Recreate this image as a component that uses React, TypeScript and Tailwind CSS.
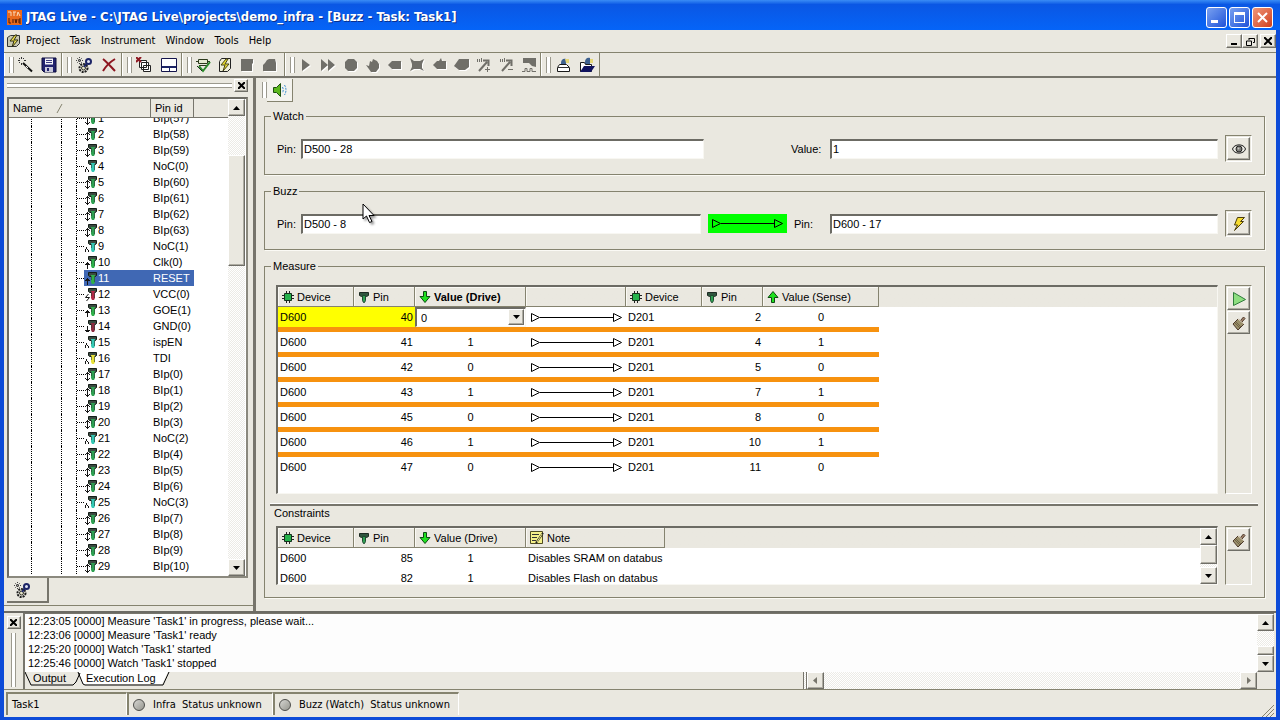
import { useState } from 'react';
import type { ReactNode } from 'react';
import clsx from 'clsx';

const RAISED = 'border border-t-white border-l-white border-r-[#6f6e67] border-b-[#6f6e67] bg-[#eae8e0] shadow-[inset_-1px_-1px_0_#aeaca2]';
const SUNKEN = 'border-t-2 border-l-2 border-r border-b border-t-[#6c6b64] border-l-[#6c6b64] border-r-[#f8f7f2] border-b-[#f8f7f2]';
const FIELDSET = 'min-w-0 border border-[#85836f] px-3 shadow-[1px_1px_0_#fbfaf5]';
const TROUGH = 'bg-[repeating-conic-gradient(#ffffff_0_25%,#ecebe6_0_50%)] bg-[length:2px_2px]';
const TAHOMA = "font-['DejaVu_Sans_Condensed','DejaVu_Sans',sans-serif]";

type PinKind = 'bip' | 'noc' | 'in' | 'vcc' | 'gnd' | 'tdi';

const TREE_PINS: { no: number; id: string; kind: PinKind }[] = [
  { no: 1, id: 'BIp(57)', kind: 'bip' },
  { no: 2, id: 'BIp(58)', kind: 'bip' },
  { no: 3, id: 'BIp(59)', kind: 'bip' },
  { no: 4, id: 'NoC(0)', kind: 'noc' },
  { no: 5, id: 'BIp(60)', kind: 'bip' },
  { no: 6, id: 'BIp(61)', kind: 'bip' },
  { no: 7, id: 'BIp(62)', kind: 'bip' },
  { no: 8, id: 'BIp(63)', kind: 'bip' },
  { no: 9, id: 'NoC(1)', kind: 'noc' },
  { no: 10, id: 'Clk(0)', kind: 'in' },
  { no: 11, id: 'RESET', kind: 'in' },
  { no: 12, id: 'VCC(0)', kind: 'vcc' },
  { no: 13, id: 'GOE(1)', kind: 'in' },
  { no: 14, id: 'GND(0)', kind: 'gnd' },
  { no: 15, id: 'ispEN', kind: 'noc' },
  { no: 16, id: 'TDI', kind: 'tdi' },
  { no: 17, id: 'BIp(0)', kind: 'bip' },
  { no: 18, id: 'BIp(1)', kind: 'bip' },
  { no: 19, id: 'BIp(2)', kind: 'bip' },
  { no: 20, id: 'BIp(3)', kind: 'bip' },
  { no: 21, id: 'NoC(2)', kind: 'noc' },
  { no: 22, id: 'BIp(4)', kind: 'bip' },
  { no: 23, id: 'BIp(5)', kind: 'bip' },
  { no: 24, id: 'BIp(6)', kind: 'bip' },
  { no: 25, id: 'NoC(3)', kind: 'noc' },
  { no: 26, id: 'BIp(7)', kind: 'bip' },
  { no: 27, id: 'BIp(8)', kind: 'bip' },
  { no: 28, id: 'BIp(9)', kind: 'bip' },
  { no: 29, id: 'BIp(10)', kind: 'bip' },
];

const PIN_COLORS: Record<PinKind, string> = {
  bip: '#2fa052',
  noc: '#35c8b4',
  in: '#2fb04a',
  vcc: '#b02a48',
  gnd: '#8e2c40',
  tdi: '#e8e23a',
};

// small marker drawn left of the pin head
const PIN_MARKS: Record<PinKind, string> = {
  bip: 'M3.5 6v9M2 7.5h3M1 8.500h1M5 8.500h1M1 12.500h1M5 12.500h1M2 13.500h3',
  noc: 'M1.500 11v3M2.500 9v2M3.500 11v1M4.500 12v2',
  in: 'M3.500 8v7M1 10.500h5M2 9.500h3',
  vcc: 'M4.500 8L1.500 11.500h4L2.500 15',
  gnd: 'M3.500 8v6M1 12.500h5M2 13.500h3',
  tdi: 'M1.500 11v3M2.500 9v2M3.500 11v1M4.500 12v2',
};

const MEASUREMENTS = [
  { drivePin: 40, drive: 0, sensePin: 2, sense: 0 },
  { drivePin: 41, drive: 1, sensePin: 4, sense: 1 },
  { drivePin: 42, drive: 0, sensePin: 5, sense: 0 },
  { drivePin: 43, drive: 1, sensePin: 7, sense: 1 },
  { drivePin: 45, drive: 0, sensePin: 8, sense: 0 },
  { drivePin: 46, drive: 1, sensePin: 10, sense: 1 },
  { drivePin: 47, drive: 0, sensePin: 11, sense: 0 },
];

const CONSTRAINTS = [
  { device: 'D600', pin: 85, value: 1, note: 'Disables SRAM on databus' },
  { device: 'D600', pin: 82, value: 1, note: 'Disables Flash on databus' },
];

const LOG_LINES = [
  "12:23:05 [0000] Measure 'Task1' in progress, please wait...",
  "12:23:06 [0000] Measure 'Task1' ready",
  "12:25:20 [0000] Watch 'Task1' started",
  "12:25:46 [0000] Watch 'Task1' stopped",
];

/* ---------- icons ---------- */

function Icon({ size = 16, className, children }: { size?: number; className?: string; children: ReactNode }) {
  return (
    <svg width={size} height={size} viewBox={`0 0 ${size} ${size}`} className={clsx('shrink-0', className)} fill="none" aria-hidden="true">
      {children}
    </svg>
  );
}

const WandIcon = () => (
  <Icon>
    <path d="M5 6l9 8.500" stroke="#111" strokeWidth="2" />
    <path d="M8 9l2 2" stroke="#eee" />
    <path d="M3.500 0v2M3.500 6v2M0 3.500h2M6 3.500h2M1 1l1 1M6 1l-1 1M1 6l1-1" stroke="#333" />
  </Icon>
);

const SaveIcon = () => (
  <Icon>
    <path d="M1 1h14v14H3l-2-2z" fill="#22226e" stroke="#0b0b3c" />
    <path d="M4 1.500h8v6H4z" fill="#f4f4f8" />
    <path d="M5 3.500h6M5 5.500h6" stroke="#3c3c80" />
    <path d="M4 10h8v5H4z" fill="#c9c9da" />
    <path d="M6 11h2v3H6z" fill="#22226e" />
  </Icon>
);

const GearsIcon = () => (
  <Icon>
    <path d="M3.500 0v7M0 3.500h7M1 1l5 5M6 1L1 6" stroke="#444" strokeDasharray="1 1" />
    <circle cx="12.500" cy="4.500" r="2.500" fill="#dfe3f4" stroke="#1c2466" strokeWidth="2" />
    <circle cx="7.500" cy="11" r="4" stroke="#1d1d1d" strokeWidth="2" strokeDasharray="2 1" />
    <circle cx="7.500" cy="11" r="2" fill="#e8e6c8" stroke="#33332a" />
    <path d="M11 6l-3 4" stroke="#1c2466" strokeWidth="2" />
  </Icon>
);

const DeleteIcon = () => (
  <Icon>
    <path d="M2 2c4 3 8 8 12 12M14 2C9 5 5 9 2 14" stroke="#8d1620" strokeWidth="2" />
  </Icon>
);

const CascadeIcon = () => (
  <Icon>
    <path d="M3.500 3.500h7v7h-7zM5.500 5.500h7v7h-7zM7.500 8.500h7v6h-7z" fill="#fff" stroke="#222" />
    <path d="M0 0l5 5M5 0L0 5" stroke="#8d1620" strokeWidth="2" />
  </Icon>
);

const PanelIcon = () => (
  <Icon>
    <path d="M.5 1.500h15v13H.5z" fill="#fff" stroke="#14144c" />
    <path d="M1 9h14v2H1z" fill="#1c2466" />
    <path d="M8.500 10v4" stroke="#1c2466" />
  </Icon>
);

const ChipCheckIcon = () => (
  <Icon>
    <path d="M3.500 2.500h9v4h-9z" fill="#e4ead0" stroke="#2c3a1c" />
    <path d="M1 4.500h2M13 4.500h2M4 8.500h8" stroke="#2c3a1c" />
    <path d="M4 9l4 5 7-9" stroke="#2a8a2a" strokeWidth="2" />
    <path d="M2 9l5 5" stroke="#1f2f1f" />
  </Icon>
);

const BoltPageIcon = () => (
  <Icon>
    <path d="M4.500 1.500h9v10l-3 3h-8v-10z" fill="#f0f0d8" stroke="#222" />
    <path d="M9 2L4 8h4l-2 6 6-7H8l3-5z" fill="#f0e22a" stroke="#44421a" />
  </Icon>
);

const Shape = ({ d }: { d: string }) => (
  <Icon>
    <path d={d} fill="#fff" transform="translate(1 1)" />
    <path d={d} fill="#706f69" />
  </Icon>
);

const ProbeIcon = ({ sign }: { sign: string }) => (
  <Icon>
    <path d="M3 14l8-9M7 3.500h5.500V9" stroke="#706f69" strokeWidth="2" />
    <path d="M1.500 2v3M3.500 2v3M5.500 1v4" stroke="#706f69" />
    <path d={sign} stroke="#706f69" />
  </Icon>
);

const WaveIcon = () => (
  <Icon>
    <path d="M2 1h13v9l-4-1-3-3H2z" fill="#706f69" />
    <path d="M1 14.500h3v-3h2v3h3v-3h2v3h4" stroke="#706f69" />
  </Icon>
);

const TrayIcon = () => (
  <Icon>
    <path d="M6 6c0-3 2-5 5-4v5H6z" fill="#3e618f" />
    <path d="M10 2h4v4h-3z" fill="#e5d777" />
    <path d="M4.500 7.500h7l3 3v4h-12v-4z" fill="#fff" stroke="#1a1a1a" />
    <path d="M3 10.500h11" stroke="#333" />
  </Icon>
);

const FolderIcon = () => (
  <Icon>
    <path d="M6 5c0-3 2-5 5-4v6H6z" fill="#3e618f" />
    <path d="M11 2h3v4h-3z" fill="#e5d777" />
    <path d="M1.500 5.500h4l1 2h6v7h-11z" fill="#fff" stroke="#1a1a1a" />
    <path d="M5 9h11l-4 6H1z" fill="#10125e" />
  </Icon>
);

const SpeakerIcon = () => (
  <Icon>
    <path d="M1.500 5.500h3l4-4v13l-4-4h-3z" fill="#5cb81e" stroke="#1d4f10" />
    <path d="M10.500 5c1 2 1 4 0 6M12.500 3c2 3 2 7 0 10" stroke="#3b8fd0" strokeDasharray="2 1" />
  </Icon>
);

const EyeIcon = () => (
  <Icon>
    <path d="M1.500 8C3 2.500 13 2.500 14.500 8 13 13.500 3 13.500 1.500 8z" fill="#e8e8e2" stroke="#1a1a1a" strokeWidth="1" />
    <circle cx="8" cy="8" r="3" fill="#7c7c78" stroke="#222" />
    <circle cx="7.500" cy="7.500" r="1" fill="#c8c8c4" />
  </Icon>
);

const BoltIcon = () => (
  <Icon>
    <path d="M6.500 1.500h7l-4 4h3L3.500 14.500 6.500 9H3.500z" fill="#f6dc30" stroke="#4a3c0a" strokeLinejoin="round" />
  </Icon>
);

const RunIcon = () => (
  <Icon>
    <path d="M2.500 1.500l12 7-12 6z" fill="#8ede80" stroke="#2f7c3b" />
  </Icon>
);

const BrushIcon = () => (
  <Icon>
    <path d="M9.500 5.500l3-3.500 1.500 1.500-3 3.500z" fill="#a0826a" stroke="#4c382a" />
    <path d="M2 9l5-5 6 5-6 6z" fill="#9a8f6a" stroke="#4c382a" />
    <path d="M7 4l6 5" stroke="#f0e6cc" />
    <path d="M4 8l5 5M5 7l5 5" stroke="#6f6345" />
  </Icon>
);

const ChipIcon = () => (
  <Icon size={12}>
    <path d="M2.500 2.500h7v7h-7z" fill="#26b34c" stroke="#15301c" />
    <path d="M4.500 0v2M7.500 0v2M4.500 10v2M7.500 10v2M0 4.500h2M0 7.500h2M10 4.500h2M10 7.500h2" stroke="#222" />
  </Icon>
);

const PinHeadIcon = () => (
  <Icon size={12}>
    <path d="M1.500 1.500h9v3l-2 1h-5l-2-1z" fill="#30553f" stroke="#1d2b23" />
    <path d="M4.500 4.500h3v5l-1 2h-1l-1-2z" fill="#2fa052" stroke="#1f4a30" />
  </Icon>
);

const ArrowIcon = ({ up }: { up?: boolean }) => (
  <Icon size={12} className={up ? 'rotate-180' : undefined}>
    <path d="M4.500 .5h3v5h3.500L6 11.500 1 5.500h3.500z" fill="#1fe01f" stroke="#0d4a12" />
  </Icon>
);

const NoteIcon = () => (
  <Icon size={14}>
    <path d="M.5 .5h12v12H.5z" fill="#f5f08a" stroke="#4e4b22" />
    <path d="M2 3.500h7M2 6.500h5M2 9.500h4" stroke="#333" />
    <path d="M6 12l7-10" stroke="#222" strokeWidth="2" />
    <path d="M7 11l5-8" stroke="#f5f08a" />
  </Icon>
);

const TreePinIcon = ({ kind }: { kind: PinKind }) => (
  <svg width="14" height="16" viewBox="0 0 14 16" className="shrink-0" fill="none" aria-hidden="true">
    <path d="M4.500 2.500h8v3l-1 1h-6l-1-1z" fill="#3a4a40" stroke="#141c17" />
    <path d="M7 5h4v7l-1 2H8l-1-2z" fill={PIN_COLORS[kind]} />
    <path d="M10.500 6v6M7.500 6v4" stroke="#2d4035" strokeOpacity=".6" />
    <path d={PIN_MARKS[kind]} stroke="#151515" />
  </svg>
);

function Wire({ className }: { className?: string }) {
  return (
    <div className={clsx('flex items-center text-black', className)}>
      <svg width="9" height="11" viewBox="0 0 9 11" fill="none" className="shrink-0">
        <path d="M.5 1.500l8 4-8 4z" stroke="currentColor" />
      </svg>
      <div className="h-px flex-1 bg-current" />
      <svg width="9" height="11" viewBox="0 0 9 11" fill="none" className="shrink-0">
        <path d="M.5 1.500l8 4-8 4z" stroke="currentColor" />
      </svg>
    </div>
  );
}

/* ---------- small controls ---------- */

function Grip() {
  return <div className="h-4 w-[5px] shrink-0 border-x border-[#9b998e] bg-white" />;
}

function ScrollButton({ dir, muted }: { dir: 'up' | 'down' | 'left' | 'right'; muted?: boolean }) {
  const paths = { up: 'M0 4h7L3.500 0z', down: 'M0 0h7L3.500 4z', left: 'M4 0v7L0 3.500z', right: 'M0 0v7l4-3.500z' };
  const wide = dir === 'up' || dir === 'down';
  return (
    <button aria-label={`Scroll ${dir}`} className={clsx('flex size-[17px] shrink-0 items-center justify-center', RAISED)}>
      <svg width={wide ? 7 : 4} height={wide ? 4 : 7}>
        <path d={paths[dir]} fill={muted ? '#77756c' : '#000'} />
      </svg>
    </button>
  );
}

function CloseButton({ label }: { label: string }) {
  return (
    <button aria-label={label} className={clsx('flex h-[13px] w-[14px] shrink-0 items-center justify-center', RAISED)}>
      <svg width="7" height="7">
        <path d="M0 0l7 7M7 0L0 7" stroke="#000" strokeWidth="2" />
      </svg>
    </button>
  );
}

function IconButton({ label, children }: { label: string; children: ReactNode }) {
  return (
    <button aria-label={label} className={clsx('flex h-[23px] w-full items-center justify-center', RAISED)}>
      {children}
    </button>
  );
}

function IconWell({ children, className }: { children: ReactNode; className?: string }) {
  return (
    <div className={clsx('flex w-[27px] shrink-0 flex-col gap-px border border-t-[#85836f] border-l-[#85836f] border-r-white border-b-white p-px', className)}>
      {children}
    </div>
  );
}

function ToolGroup({ className, tools }: { className: string; tools: [string, ReactNode][] }) {
  return (
    <div className={clsx('flex items-center border-r border-[#85836f] border-l border-l-white pl-1', className)}>
      <Grip />
      <div className="flex flex-1">
        {tools.map(([label, icon]) => (
          <button key={label} aria-label={label} title={label} className="flex h-[22px] flex-1 items-center justify-center">
            {icon}
          </button>
        ))}
      </div>
    </div>
  );
}

function HeadCell({ children, bold }: { children?: ReactNode; bold?: boolean }) {
  return (
    <th
      className={clsx(
        'h-5 border-r border-b border-[#85836f] p-0 pl-1 text-left shadow-[inset_1px_1px_0_#faf9f4]',
        bold ? 'font-bold' : 'font-normal',
      )}
    >
      <span className="flex items-center gap-[3px] whitespace-nowrap">{children}</span>
    </th>
  );
}

/* ---------- window parts ---------- */

function TitleBar() {
  const base = 'flex size-[21px] items-center justify-center rounded-[3px] border border-white';
  return (
    <header className="flex h-[30px] shrink-0 items-center bg-linear-to-b from-[#3a8cf5] via-[#0a57e4] via-15% to-[#0564f8] px-[7px]">
      <svg width="15" height="15" viewBox="0 0 15 15" className="mt-1" aria-hidden="true">
        <path d="M0 0h15v15H0z" fill="#e8691c" />
        <path d="M1 2h3v4M6 2h3M7 2v4M10 6l1-4 2 4" stroke="#fbd9b8" fill="none" />
        <path d="M2 8v5h2M6 9v4M8 9l1 4 1-4M14 9h-2v4h2M12 11h2" stroke="#4a1c08" fill="none" />
      </svg>
      <h1 className={clsx('mt-1 ml-1 flex-1 truncate text-[13px] leading-5 font-bold text-white [text-shadow:1px_1px_0_#0a2f8c]', TAHOMA)}>
        JTAG Live - C:\JTAG Live\projects\demo_infra - [Buzz - Task: Task1]
      </h1>
      <div className="mt-1 flex gap-0.5">
        <button aria-label="Minimize" className={clsx(base, 'bg-linear-to-br from-[#7aa0f0] to-[#1f50d8]')}>
          <span className="mt-2 mr-1 h-[3px] w-[7px] bg-white" />
        </button>
        <button aria-label="Maximize" className={clsx(base, 'bg-linear-to-br from-[#7aa0f0] to-[#1f50d8]')}>
          <span className="h-[11px] w-[11px] border border-t-[3px] border-white" />
        </button>
        <button aria-label="Close" className={clsx(base, 'bg-linear-to-br from-[#ee9578] to-[#cf3c17]')}>
          <svg width="11" height="11">
            <path d="M1 1l9 9M10 1l-9 9" stroke="#fff" strokeWidth="2" />
          </svg>
        </button>
      </div>
    </header>
  );
}

function MenuBar() {
  const mdi = clsx('flex h-[14px] w-4 items-center justify-center', RAISED);
  return (
    <nav className={clsx('flex h-[23px] shrink-0 items-center border-b border-[#85836f] pl-[3px]', TAHOMA)}>
      <Icon size={14}>
        <path d="M3.500 1.500h9v8l-3 3h-9v-9z" fill="#c9c8b0" stroke="#333" />
        <path d="M8 1L3 7h4l-2 6 6-7H7l3-5z" fill="#efe04a" stroke="#2f2e14" />
      </Icon>
      <div className="ml-[5px] flex flex-1 gap-[10px]">
        {['Project', 'Task', 'Instrument', 'Window', 'Tools', 'Help'].map(item => (
          <button key={item}>{item}</button>
        ))}
      </div>
      <button aria-label="Minimize document" className={mdi}>
        <span className="mt-[6px] h-0.5 w-[6px] bg-black" />
      </button>
      <button aria-label="Restore document" className={mdi}>
        <svg width="9" height="9" fill="none">
          <path d="M3 1.500h5.500v4H7M3 1v2M.5 4h5v4.500h-5z" stroke="#000" />
        </svg>
      </button>
      <button aria-label="Close document" className={clsx(mdi, 'ml-0.5')}>
        <svg width="8" height="8">
          <path d="M0 0l8 8M8 0L0 8" stroke="#000" strokeWidth="2" />
        </svg>
      </button>
    </nav>
  );
}

function ToolBar() {
  return (
    <div className="flex h-[25px] shrink-0 border-b-2 border-[#77756c]">
      <ToolGroup className="w-[58px]" tools={[['Wizard', <WandIcon />], ['Save', <SaveIcon />]]} />
      <ToolGroup className="w-[60px]" tools={[['Settings', <GearsIcon />], ['Delete', <DeleteIcon />]]} />
      <ToolGroup className="w-[60px]" tools={[['Close windows', <CascadeIcon />], ['Panels', <PanelIcon />]]} />
      <ToolGroup
        className="w-[103px] pr-1"
        tools={[
          ['Check infra', <ChipCheckIcon />],
          ['Buzz', <BoltPageIcon />],
          ['Stop', <Shape d="M2 2h12v4l-1 1v7H2z" />],
          ['Halt', <Shape d="M2 14V8l2-2 2-3 2-1h6l1 4v8z" />],
        ]}
      />
      <ToolGroup
        className="w-[256px]"
        tools={[
          ['Run', <Shape d="M4 2l8 6-8 6z" />],
          ['Run all', <Shape d="M1 2l7 6-7 6zM8 2l7 6-7 6z" />],
          ['Record', <Shape d="M5 2h6l3 3v6l-3 3H5l-3-3V5z" />],
          ['Hold', <Shape d="M1 8l3 1 1-5 2 1 1-3 2 1 2 1 2 3v4l-3 4H6z" />],
          ['Tag', <Shape d="M1 8l4-4h9v8H5z" />],
          ['Clear', <Shape d="M1 1l4 3h6l4-2-2 5v4l2 3-4-2H5l-4 2 2-4V7z" />],
          ['Group', <Shape d="M1 8l4-4h2l2-3 1 3h4v8H5z" />],
          ['Label', <Shape d="M0 9l5-7h10v8l-4 3H5z" />],
          ['Add probe', <ProbeIcon sign="M9 12.500h5M11.500 10v5" />],
          ['Remove probe', <ProbeIcon sign="M9 12.500h5" />],
          ['Waveform', <WaveIcon />],
        ]}
      />
      <ToolGroup className="w-[59px]" tools={[['Pack', <TrayIcon />], ['Open', <FolderIcon />]]} />
    </div>
  );
}

function PinTree() {
  const [selected, setSelected] = useState(11);

  return (
    <aside className="flex w-[249px] shrink-0 flex-col">
      <div className="flex h-[19px] items-center gap-0.5 pr-[5px] pb-1 pl-[3px]">
        <div className="h-[5px] flex-1 border-y border-[#9b998e] bg-white" />
        <CloseButton label="Close project tree" />
      </div>
      <div className="flex min-h-0 flex-1 flex-col pr-[5px] pl-[3px]">
        <div className="flex min-h-0 flex-1 border-2 border-t-[#6c6b64] border-l-[#6c6b64] border-r-[#8b897e] border-b-[#8b897e] bg-white pr-px">
          <div className="flex min-w-0 flex-1 flex-col">
            <div className="z-10 flex h-[19px] shrink-0 items-center border-b border-[#77756c] bg-[#eae8e0]">
              <div className="flex h-full w-[142px] items-center gap-3 border-r border-[#77756c] pl-1">
                Name
                <svg width="8" height="9" className="ml-0.5">
                  <path d="M1 9l5-9" stroke="#85836f" />
                </svg>
              </div>
              <div className="flex h-full w-[43px] items-center border-r border-[#77756c] pl-1">Pin id</div>
            </div>
            <div className="min-h-0 flex-1 overflow-hidden">
              <table className="-mt-2 border-separate border-spacing-0">
                <tbody>
                  {TREE_PINS.map(pin => {
                    const active = pin.no === selected;
                    return (
                      <tr key={pin.no} onClick={() => setSelected(pin.no)} className={clsx('h-4 leading-4', active && 'text-white')}>
                        <td className="p-0">
                          <div className="flex h-4 w-[75px] items-center">
                            <span className="h-4 w-[22px]" />
                            <span className="h-4 w-[30px] border-l border-dotted border-black" />
                            <span className="h-4 w-[15px] border-l border-dotted border-black" />
                            <span className="h-4 w-px border-l border-dotted border-black" />
                            <span className="w-[7px] border-t border-dotted border-black" />
                          </div>
                        </td>
                        <td className={clsx('p-0', active && 'bg-[#4068b4]')}>
                          <div className="flex h-4 w-[67px] items-center">
                            <TreePinIcon kind={pin.kind} />
                            {pin.no}
                          </div>
                        </td>
                        <td className={clsx('p-0', active && 'bg-[#4068b4]')}>
                          <div className="h-4 w-[43px] pl-0.5">{pin.id}</div>
                        </td>
                      </tr>
                    );
                  })}
                </tbody>
              </table>
            </div>
          </div>
          <div className={clsx('flex w-[17px] shrink-0 flex-col', TROUGH)}>
            <ScrollButton dir="up" />
            <div className="h-[39px]" />
            <div className={clsx('h-[111px]', RAISED)} />
            <div className="flex-1" />
            <ScrollButton dir="down" />
          </div>
        </div>
        <button
          aria-label="Project settings tab"
          className="flex h-[25px] w-[42px] items-center border-r-2 border-b-2 border-[#77756c] pl-[7px]"
        >
          <GearsIcon />
        </button>
      </div>
      <div className="mt-[2px] mb-[5px] h-px bg-[#85836f]" />
    </aside>
  );
}

function WatchPanel() {
  return (
    <fieldset className={clsx(FIELDSET, 'pt-3 pb-[13px]')}>
      <legend className="-ml-[6px] px-0.5 leading-[14px]">Watch</legend>
      <div className="grid h-[26px] grid-cols-[24px_403fr_126px_388fr_34px] items-center">
        <label htmlFor="watch-pin">Pin:</label>
        <input id="watch-pin" defaultValue="D500 - 28" className={clsx('h-5 min-w-0 bg-white px-px', SUNKEN)} />
        <label htmlFor="watch-value" className="pl-[87px]">Value:</label>
        <input id="watch-value" defaultValue="1" className={clsx('h-5 min-w-0 bg-white px-px', SUNKEN)} />
        <IconWell className="ml-[7px]">
          <IconButton label="Watch"><EyeIcon /></IconButton>
        </IconWell>
      </div>
    </fieldset>
  );
}

function BuzzPanel() {
  return (
    <fieldset className={clsx(FIELDSET, 'pt-3 pb-[13px]')}>
      <legend className="-ml-[6px] px-0.5 leading-[14px]">Buzz</legend>
      <div className="grid h-[26px] grid-cols-[24px_403fr_126px_388fr_34px] items-center">
        <label htmlFor="buzz-from">Pin:</label>
        <input id="buzz-from" defaultValue="D500 - 8" className={clsx('mr-[3px] h-5 min-w-0 bg-white px-px', SUNKEN)} />
        <div className="flex items-center pl-1">
          <div className="flex h-[19px] w-[79px] items-center bg-[#00ff00] px-1">
            <Wire className="flex-1" />
          </div>
          <label htmlFor="buzz-to" className="ml-[7px]">Pin:</label>
        </div>
        <input id="buzz-to" defaultValue="D600 - 17" className={clsx('h-5 min-w-0 bg-white px-px', SUNKEN)} />
        <IconWell className="ml-[7px]">
          <IconButton label="Buzz"><BoltIcon /></IconButton>
        </IconWell>
      </div>
    </fieldset>
  );
}

function MeasureTable() {
  const [drive, setDrive] = useState('0');

  return (
    <table className="w-[601px] table-fixed border-separate border-spacing-0">
      <colgroup>
        <col className="w-[76px]" />
        <col className="w-[61px]" />
        <col className="w-[111px]" />
        <col className="w-[100px]" />
        <col className="w-[76px]" />
        <col className="w-[61px]" />
        <col className="w-[116px]" />
      </colgroup>
      <thead>
        <tr>
          <HeadCell><ChipIcon /> Device</HeadCell>
          <HeadCell><PinHeadIcon /> Pin</HeadCell>
          <HeadCell bold><ArrowIcon /> Value (Drive)</HeadCell>
          <HeadCell />
          <HeadCell><ChipIcon /> Device</HeadCell>
          <HeadCell><PinHeadIcon /> Pin</HeadCell>
          <HeadCell><ArrowIcon up /> Value (Sense)</HeadCell>
        </tr>
      </thead>
      <tbody>
        {MEASUREMENTS.map((m, i) => {
          const last = i === MEASUREMENTS.length - 1;
          const cell = clsx('p-0', last ? 'h-5' : 'h-[25px] border-b-[5px] border-[#f7920f]');
          const driven = i === 0 && 'bg-[#ffff00]';
          return (
            <tr key={m.drivePin}>
              <td className={clsx(cell, driven, 'pl-0.5')}>D600</td>
              <td className={clsx(cell, driven, 'pr-0.5 text-right')}>{m.drivePin}</td>
              <td className={clsx(cell, 'text-center')}>
                {i === 0 ? (
                  <div className="relative flex h-5">
                    <select
                      aria-label="Drive value"
                      value={drive}
                      onChange={e => setDrive(e.target.value)}
                      className={clsx('h-5 w-full appearance-none bg-white pl-1', SUNKEN)}
                    >
                      <option>0</option>
                      <option>1</option>
                    </select>
                    <span className={clsx('pointer-events-none absolute top-0.5 right-0.5 flex h-4 w-4 items-center justify-center', RAISED)}>
                      <svg width="7" height="4"><path d="M0 0h7L3.500 4z" /></svg>
                    </span>
                  </div>
                ) : (
                  m.drive
                )}
              </td>
              <td className={cell}><Wire className="mr-1 ml-[5px]" /></td>
              <td className={clsx(cell, 'pl-0.5')}>D201</td>
              <td className={clsx(cell, 'pr-0.5 text-right')}>{m.sensePin}</td>
              <td className={clsx(cell, 'text-center')}>{m.sense}</td>
            </tr>
          );
        })}
      </tbody>
    </table>
  );
}

function ConstraintsTable() {
  return (
    <table className="w-[387px] table-fixed border-separate border-spacing-0">
      <colgroup>
        <col className="w-[76px]" />
        <col className="w-[61px]" />
        <col className="w-[111px]" />
        <col className="w-[139px]" />
      </colgroup>
      <thead>
        <tr>
          <HeadCell><ChipIcon /> Device</HeadCell>
          <HeadCell><PinHeadIcon /> Pin</HeadCell>
          <HeadCell><ArrowIcon /> Value (Drive)</HeadCell>
          <HeadCell><NoteIcon /> Note</HeadCell>
        </tr>
      </thead>
      <tbody>
        {CONSTRAINTS.map(c => (
          <tr key={c.pin}>
            <td className="h-5 p-0 pl-0.5">{c.device}</td>
            <td className="p-0 pr-0.5 text-right">{c.pin}</td>
            <td className="p-0 text-center">{c.value}</td>
            <td className="p-0 pl-0.5 whitespace-nowrap">{c.note}</td>
          </tr>
        ))}
      </tbody>
    </table>
  );
}

// white sheet with a header-coloured strip behind the column heads
const SHEET = 'min-w-0 flex-1 overflow-hidden bg-linear-to-b from-[#eae8e0] from-[20px] to-white to-[20px]';

function MeasurePanel() {
  return (
    <fieldset className={clsx(FIELDSET, 'flex min-h-0 flex-1 flex-col pt-3 pb-3 pl-[11px]')}>
      <legend className="-ml-[5px] px-0.5 leading-[14px]">Measure</legend>
      <div className="flex min-h-0 flex-1 gap-[7px]">
        <div className={clsx(SHEET, SUNKEN)}>
          <MeasureTable />
        </div>
        <IconWell>
          <IconButton label="Run measurement"><RunIcon /></IconButton>
          <IconButton label="Clear measurement"><BrushIcon /></IconButton>
        </IconWell>
      </div>
      <div className="-mx-[6px] mt-[9px] h-[3px] border-t border-b-2 border-t-white border-b-[#77756c]" />
      <h2 className="-ml-0.5 mb-1.5 leading-[14px]">Constraints</h2>
      <div className="flex h-[59px] shrink-0 gap-[7px]">
        <div className={clsx('flex min-w-0 flex-1', SUNKEN)}>
          <div className={SHEET}>
            <ConstraintsTable />
          </div>
          <div className={clsx('flex w-[17px] shrink-0 flex-col', TROUGH)}>
            <ScrollButton dir="up" />
            <div className={clsx('h-[19px]', RAISED)} />
            <div className="flex-1" />
            <ScrollButton dir="down" />
          </div>
        </div>
        <IconWell>
          <IconButton label="Clear constraints"><BrushIcon /></IconButton>
        </IconWell>
      </div>
    </fieldset>
  );
}

function LogPanel() {
  return (
    <section className="flex h-[79px] shrink-0 border-t-2 border-b border-t-[#6c6b64] border-b-[#85836f] pr-0.5">
      <div className="flex w-[19px] shrink-0 flex-col items-center gap-1 pt-[3px]">
        <CloseButton label="Close log" />
        <div className="mb-0.5 w-[5px] flex-1 border-x border-[#9b998e] bg-white" />
      </div>
      <div className="flex min-w-0 flex-1 flex-col border-t border-l-2 border-[#77756c]">
        <div className="flex min-h-0 flex-1 bg-[#fdfdfd]">
          <div className="min-w-0 flex-1 pl-[3px] leading-[14px] whitespace-nowrap">
            {LOG_LINES.map(line => (
              <p key={line}>{line}</p>
            ))}
          </div>
          <div className={clsx('flex w-[17px] shrink-0 flex-col', TROUGH)}>
            <ScrollButton dir="up" />
            <div className="flex-1" />
            <div className={clsx('h-[9px]', RAISED)} />
            <ScrollButton dir="down" />
          </div>
        </div>
        <div className="flex h-[17px] shrink-0">
          <div className="relative flex min-w-0 flex-[783] items-start leading-[13px]">
            <svg width="146" height="15" className="absolute top-0 left-0" fill="none" aria-hidden="true">
              <path d="M53 0l5 12h79l6-12z" fill="#fff" />
              <path d="M0 0l6 13h42l3-3M51 10l4-9M53 0l5 12 2 1h78l6-13" stroke="#000" />
            </svg>
            <button className="relative ml-2 w-9 text-left">Output</button>
            <button className="relative ml-[17px]">Execution Log</button>
          </div>
          <div className={clsx('flex flex-[453] border-l-4 border-double border-[#77756c]', TROUGH)}>
            <ScrollButton dir="left" muted />
            <div className="flex-1" />
            <ScrollButton dir="right" muted />
          </div>
          <div className="w-[17px]" />
        </div>
      </div>
    </section>
  );
}

function StatusCell({ children, className }: { children: ReactNode; className: string }) {
  return (
    <div className={clsx('flex h-[23px] items-center border-t-2 border-l-2 border-r border-t-[#85836f] border-l-[#85836f] border-r-white whitespace-pre', className)}>
      {children}
    </div>
  );
}

const Led = () => (
  <span className="size-3 shrink-0 rounded-full border border-[#4c4c4a] bg-linear-to-br from-[#d6d6d2] to-[#96968f]" />
);

function StatusBar() {
  return (
    <footer className={clsx('flex h-[27px] shrink-0 items-center px-0.5', TAHOMA)}>
      <StatusCell className="w-[121px] pl-1">Task1</StatusCell>
      <StatusCell className="w-[146px] gap-[8px] pl-1"><Led />{'Infra  Status unknown'}</StatusCell>
      <StatusCell className="w-[186px] gap-[8px] pl-1"><Led />{'Buzz (Watch)  Status unknown'}</StatusCell>
      <svg width="12" height="12" className="mt-auto ml-auto" aria-hidden="true">
        <path d="M0 12L12 0M4 12l8-8M8 12l4-4" stroke="#85836f" strokeWidth="1" />
      </svg>
    </footer>
  );
}

export default function App() {
  return (
    <div className="relative flex h-screen flex-col overflow-hidden bg-[#0d4bd8] font-['Liberation_Sans',Arial,sans-serif] text-[11px] leading-[14px] text-black">
      <TitleBar />
      <div className="mx-1 mb-[3px] flex min-h-0 flex-1 flex-col bg-[#eae8e0]">
        <MenuBar />
        <ToolBar />
        <div className="flex min-h-0 flex-1">
          <PinTree />
          <main className="flex min-w-0 flex-1 flex-col border-l-[3px] border-[#77756c] pr-[11px]">
            <div className="flex h-6 shrink-0 items-center pl-1.5">
              <Grip />
              <button aria-label="Sound" className="flex h-[23px] w-[26px] items-center justify-center border-r border-b border-[#85836f] bg-[#f4f3ee]">
                <SpeakerIcon />
              </button>
            </div>
            <div className="flex min-h-0 flex-1 flex-col gap-[9px] pt-[7px] pb-[13px] pl-2">
              <WatchPanel />
              <BuzzPanel />
              <MeasurePanel />
            </div>
          </main>
        </div>
        <LogPanel />
        <StatusBar />
      </div>
      {/* mouse pointer */}
      <svg
        width="14"
        height="21"
        viewBox="0 0 14 21"
        className="pointer-events-none absolute top-[203px] left-[362px] drop-shadow-[2px_2px_1px_#00000066]"
        aria-hidden="true"
      >
        <path d="M1 1v15l3.500-3 3 6.500 2.500-1-3-6h5z" fill="#fff" stroke="#000" />
      </svg>
    </div>
  );
}
